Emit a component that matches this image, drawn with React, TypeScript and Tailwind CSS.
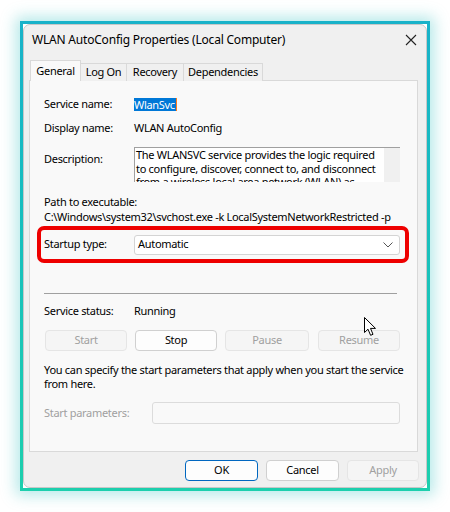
import React from "react";

const font = { fontFamily: '"Noto Sans", "Segoe UI", sans-serif' };

function Btn({ label, w, disabled, focused }: { label: string; w: string; disabled?: boolean; focused?: boolean }) {
  return (
    <div
      className={
        "h-[21px] flex items-center justify-center rounded-[4px] text-[11px] " +
        w +
        " " +
        (disabled
          ? "bg-[#f5f5f5] border border-[#e5e5e5] text-[#a0a0a0]"
          : focused
          ? "bg-[#fdfdfd] border border-[#0067c0] text-black"
          : "bg-[#fdfdfd] border border-[#d0d0d0] text-black")
      }
    >
      {label}
    </div>
  );
}

export default function App() {
  return (
    <div className="w-[450px] h-[512px] bg-white pt-[21px] pl-[20px] overflow-hidden" style={font}>
      <div className="w-[410px] h-[470px] p-[3px] bg-gradient-to-b from-[#19b2c9] to-[#1dcfad] shadow-[0_0_14px_4px_rgba(40,190,190,0.35)]">
        <div className="w-full h-full bg-white">
          <div className="w-full h-full rounded-[7px] bg-[#f0f0f0] border border-[#c8c8c8] flex flex-col tracking-[-0.3px]">
            {/* title bar */}
            <div className="h-[29px] flex items-center pl-[8px] pr-[8px] text-[12px] text-black">
              <span className="flex-1 tracking-[-0.2px]">WLAN AutoConfig Properties (Local Computer)</span>
              <svg width="12" height="12" viewBox="0 0 12 12" className="mr-[1px]">
                <path d="M1 1 L11 11 M11 1 L1 11" stroke="#222" strokeWidth="1.1" />
              </svg>
            </div>
            {/* tabs */}
            <div className="ml-[5px] mt-[6px] flex items-end h-[21px] text-[11px] text-black relative z-10">
              <div className="w-[51px] h-[21px] ml-[1px] bg-[#f9f9f9] border border-[#d9d9d9] border-b-0 flex items-center justify-center">General</div>
              <div className="w-[46px] h-[18px] bg-[#f0f0f0] border border-[#d9d9d9] border-l-0 border-b-0 flex items-center justify-center">Log On</div>
              <div className="w-[57px] h-[18px] bg-[#f0f0f0] border border-[#d9d9d9] border-l-0 border-b-0 flex items-center justify-center">Recovery</div>
              <div className="w-[79px] h-[18px] bg-[#f0f0f0] border border-[#d9d9d9] border-l-0 border-b-0 flex items-center justify-center">Dependencies</div>
            </div>
            {/* panel */}
            <div className="ml-[5px] -mt-[1px] w-[389px] h-[372px] bg-[#f9f9f9] border border-[#d9d9d9] flex flex-col text-[11px] text-black">
              <div className="mt-[15px] ml-[14px] h-[16px] flex items-center">
                <span className="w-[90px]">Service name:</span>
                <span className="bg-[#0078d7] text-white h-[13px] leading-[13px] pr-[1px] border-r-[1px] border-[#ff7a1a]">WlanSvc</span>
              </div>
              <div className="mt-[8px] ml-[14px] h-[16px] flex items-center">
                <span className="w-[90px]">Display name:</span>
                <span>WLAN AutoConfig</span>
              </div>
              <div className="mt-[11px] ml-[14px] h-[35px] flex items-start">
                <span className="w-[90px] mt-[4px] leading-[16px]">Description:</span>
                <div className="w-[266px] h-[35px] bg-white border-t border-l border-[#a0a0a0] flex overflow-hidden">
                  <div className="flex-1 pl-[1px] leading-[13.5px] overflow-hidden">
                    The WLANSVC service provides the logic required to configure, discover, connect to, and disconnect from a wireless local area network (WLAN) as defined by IEEE 802.11 standards.
                  </div>
                  <div className="w-[16px] h-full bg-[#f0f0f0]" />
                </div>
              </div>
              <div className="mt-[12px] ml-[14px] h-[15px] leading-[15px]">Path to executable:</div>
              <div className="ml-[14px] h-[15px] leading-[15px] whitespace-nowrap">C:\Windows\system32\svchost.exe -k LocalSystemNetworkRestricted -p</div>
              <div className="mt-[2px] ml-[7px] w-[372px] h-[37px] border-[4px] border-[#ee0000] rounded-[7px] flex items-center bg-[#f9f9f9]">
                <span className="ml-[3px] w-[90px]">Startup type:</span>
                <div className="w-[266px] h-[20px] bg-white border border-[#d4d4d4] rounded-[3px] flex items-center pl-[3px] pr-[6px]">
                  <span className="flex-1">Automatic</span>
                  <svg width="10" height="6" viewBox="0 0 10 6">
                    <path d="M0.5 0.5 L5 5 L9.5 0.5" stroke="#555" strokeWidth="1" fill="none" />
                  </svg>
                </div>
              </div>
              <div className="mt-[30px] ml-[14px] w-[353px] h-[1px] bg-[#a0a0a0]" />
              <div className="mt-[9px] ml-[14px] h-[16px] flex items-center">
                <span className="w-[90px]">Service status:</span>
                <span>Running</span>
              </div>
              <div className="mt-[11px] ml-[15px] flex gap-[8px] relative">
                <Btn label="Start" w="w-[82px]" disabled />
                <Btn label="Stop" w="w-[82px]" />
                <Btn label="Pause" w="w-[84px]" disabled />
                <div className="ml-[1px]">
                  <Btn label="Resume" w="w-[82px]" disabled />
                </div>
                <svg width="13" height="20" viewBox="0 0 13 20" className="absolute left-[319px] -top-[13px]">
                  <path d="M0.5 0.5 L0.5 15.5 L4 12.2 L6.6 18.3 L9 17.3 L6.5 11.4 L11.5 11.4 Z" fill="#fff" stroke="#000" strokeWidth="1" strokeLinejoin="miter" />
                </svg>
              </div>
              <div className="mt-[12px] ml-[14px] w-[370px] leading-[14px]">
                You can specify the start parameters that apply when you start the service from here.
              </div>
              <div className="mt-[11px] ml-[14px] h-[22px] flex items-center">
                <span className="w-[108px] text-[#a0a0a0]">Start parameters:</span>
                <div className="w-[248px] h-[22px] bg-[#f9f9f9] border border-[#dcdcdc] rounded-[3px]" />
              </div>
            </div>
            {/* bottom buttons */}
            <div className="mt-[8px] ml-[161px] flex gap-[8px]">
              <Btn label="OK" w="w-[73px]" focused />
              <Btn label="Cancel" w="w-[73px]" />
              <Btn label="Apply" w="w-[72px]" disabled />
            </div>
          </div>
        </div>
      </div>
    </div>
  );
}
